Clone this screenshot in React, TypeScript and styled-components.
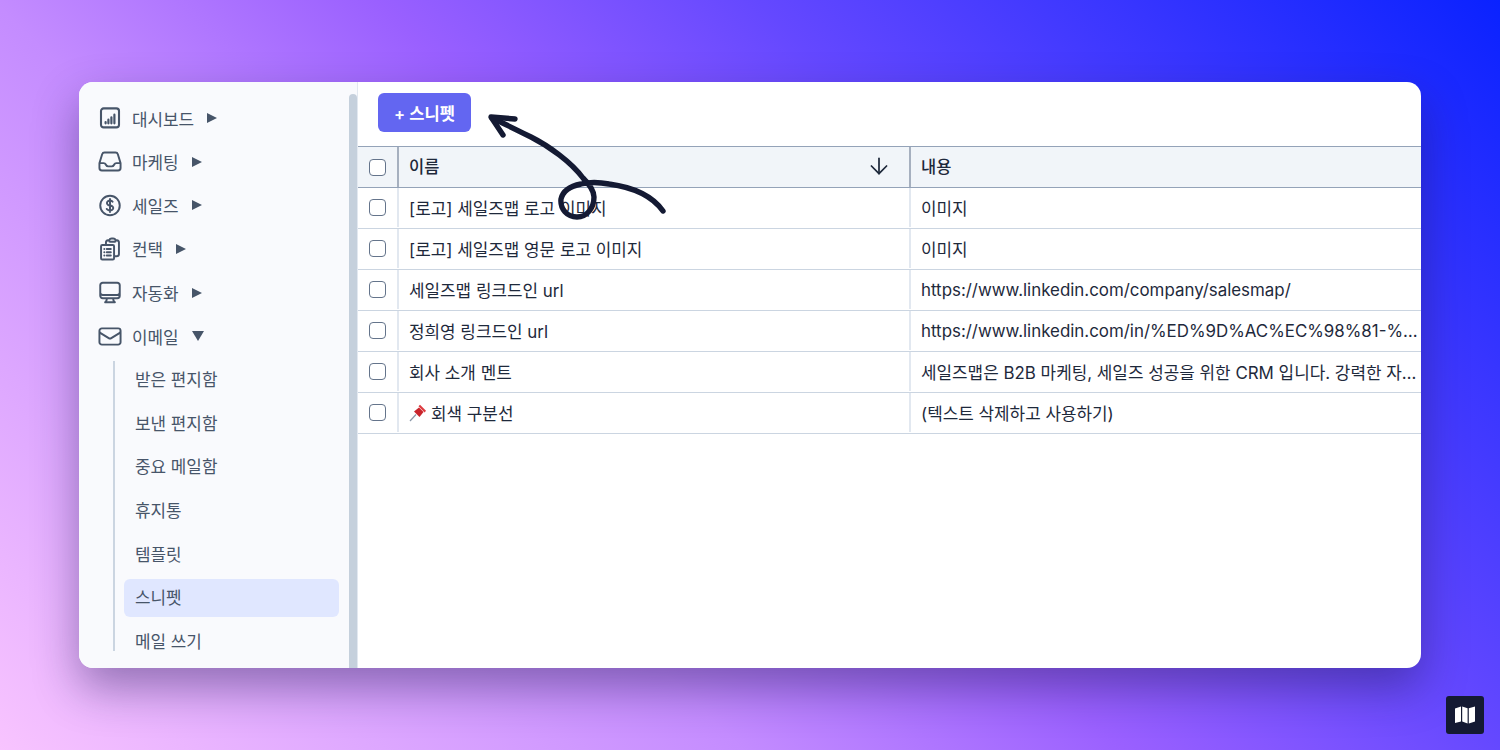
import React from "react";
import styled, { createGlobalStyle } from "styled-components";
import { ArrowDown } from "lucide-react";
import {
  HiOutlineInbox,
  HiOutlineCurrencyDollar,
  HiOutlineClipboardDocumentList,
  HiOutlineComputerDesktop,
  HiOutlineEnvelope,
} from "react-icons/hi2";

const GlobalStyle = createGlobalStyle`
  html, body { margin: 0; padding: 0; }
  body { font-family: Inter, "Noto Sans CJK KR", sans-serif; }
  * { box-sizing: border-box; }
`;

const DashIcon = () => (
  <svg width="24" height="24" viewBox="0 0 24 24" fill="none" stroke="currentColor" strokeWidth="2.1" strokeLinecap="round">
    <rect x="3" y="2.4" width="18" height="19" rx="2.6" />
    <path d="M7.6 17.3v-1.2M10.4 17.3v-3.6M13.4 17.3v-6M16.4 17.3v-8.6" strokeWidth="2.2" />
  </svg>
);

const nav = [
  { label: "대시보드", icon: <DashIcon /> },
  { label: "마케팅", icon: <HiOutlineInbox size={27} strokeWidth={1.8} /> },
  { label: "세일즈", icon: <HiOutlineCurrencyDollar size={27} strokeWidth={1.8} /> },
  { label: "컨택", icon: <HiOutlineClipboardDocumentList size={26} strokeWidth={1.8} /> },
  { label: "자동화", icon: <HiOutlineComputerDesktop size={27} strokeWidth={1.8} /> },
];

const mailItems = ["받은 편지함", "보낸 편지함", "중요 메일함", "휴지통", "템플릿", "스니펫", "메일 쓰기"];

const rows = [
  { name: "[로고] 세일즈맵 로고 이미지", body: "이미지" },
  { name: "[로고] 세일즈맵 영문 로고 이미지", body: "이미지" },
  { name: "세일즈맵 링크드인 url", body: "https://www.linkedin.com/company/salesmap/" },
  { name: "정희영 링크드인 url", body: "https://www.linkedin.com/in/%ED%9D%AC%EC%98%81-%…" },
  { name: "회사 소개 멘트", body: "세일즈맵은 B2B 마케팅, 세일즈 성공을 위한 CRM 입니다. 강력한 자…" },
  { name: "회색 구분선", body: "(텍스트 삭제하고 사용하기)", pinned: true },
];

const App = () => {
  return (
    <Page>
      <GlobalStyle />
      <Window>
        <Sidebar>
          <Nav>
            {nav.map((item) => (
              <NavItem key={item.label}>
                <NavIcon>{item.icon}</NavIcon>
                <NavLabel>{item.label}</NavLabel>
                <Caret />
              </NavItem>
            ))}
            <NavItem>
              <NavIcon>
                <HiOutlineEnvelope size={27} strokeWidth={1.8} />
              </NavIcon>
              <NavLabel>이메일</NavLabel>
              <Caret open />
            </NavItem>
            <SubList>
              {mailItems.map((item) => (
                <SubItem key={item} active={item === "스니펫"}>
                  {item}
                </SubItem>
              ))}
            </SubList>
          </Nav>
          <ScrollTrack>
            <ScrollThumb />
          </ScrollTrack>
        </Sidebar>
        <Main>
          <TopBar>
            <AddButton>+ 스니펫</AddButton>
          </TopBar>
          <HeadRow>
            <HeadCheckCell>
              <Check />
            </HeadCheckCell>
            <HeadCell>
              이름
              <ArrowDown size={26} strokeWidth={1.6} color="#1e293b" />
            </HeadCell>
            <HeadCell>내용</HeadCell>
          </HeadRow>
          {rows.map((row) => (
            <Row key={row.name}>
              <CheckCell>
                <Check />
              </CheckCell>
              <Cell>
                {row.pinned && (
                  <svg width="18" height="18" viewBox="0 0 18 18">
                    <path d="M1 17L7 10.5" stroke="#8a97a8" strokeWidth="1.2" />
                    <path d="M5 7.5L10 3.5 14.5 8 10.5 13Z" fill="#c9252c" />
                    <path d="M9.5 2.2L11 0.8 17 6.8 15.6 8.4Z" fill="#dd3a3f" />
                  </svg>
                )}
                <CellText>{row.name}</CellText>
              </Cell>
              <Cell>
                <CellText>{row.body}</CellText>
              </Cell>
            </Row>
          ))}
        </Main>
        <Scribble width="200" height="120" viewBox="0 0 200 120" fill="none">
          <path
            d="M182 109C170 92 150 85 128 82C118 80 108 80 100 82C90 84 82 88 80 97C79 107 86 115 96 115C106 115 113 106 113 95C113 88 108 82 102 76C90 60 68 44 50 35C36 28 24 22 11 16"
            stroke="#141a33"
            strokeWidth="5.4"
            strokeLinecap="round"
            strokeLinejoin="round"
          />
          <path
            d="M34 17L10 15L22 33"
            stroke="#141a33"
            strokeWidth="5.4"
            strokeLinecap="round"
            strokeLinejoin="round"
          />
        </Scribble>
      </Window>
      <Logo>
        <svg width="22" height="18" viewBox="0 0 22 18">
          <path d="M1 2.5L7 0.5V15.5L1 17ZM8.2 0.5L13.6 2.2V17.5L8.2 15.5ZM14.8 2.2L21 0.5V15.5L14.8 17.5Z" fill="#fff" />
        </svg>
      </Logo>
    </Page>
  );
};

const Page = styled.div`
  position: relative;
  width: 1500px;
  height: 750px;
  padding: 82px 79px;
  overflow: hidden;
  background: linear-gradient(45deg, #f8c4ff 0%, #c48cff 33%, #9a60ff 50%, #6448ff 67%, #0a22ff 100%);
`;

const Window = styled.div`
  position: relative;
  display: flex;
  width: 1342px;
  height: 586px;
  background: #fff;
  border-radius: 14px;
  overflow: hidden;
  box-shadow: 0 20px 45px rgba(30, 25, 80, 0.42);
`;

const Sidebar = styled.aside`
  display: flex;
  flex: none;
  width: 279px;
  background: #f9fafd;
  border-right: 1px solid #e2e8f0;
`;

const Nav = styled.nav`
  display: flex;
  flex-direction: column;
  gap: 5.67px;
  flex: 1;
  padding: 17px 10px 0 18px;
`;

const NavItem = styled.div`
  display: flex;
  align-items: center;
  flex: none;
  height: 38px;
  color: #475569;
`;

const NavIcon = styled.span`
  display: flex;
  align-items: center;
  justify-content: center;
  flex: none;
  width: 26px;
  margin-right: 9px;
`;

const NavLabel = styled.span`
  font-size: 16.9px;
  color: #475569;
`;

const Caret = styled.span<{ open?: boolean }>`
  width: 0;
  height: 0;
  margin-left: 13px;
  ${(p) =>
    p.open
      ? `border-left: 6px solid transparent; border-right: 6px solid transparent; border-top: 10px solid #475569;`
      : `border-top: 5.5px solid transparent; border-bottom: 5.5px solid transparent; border-left: 10px solid #475569;`}
`;

const SubList = styled.div`
  display: flex;
  flex-direction: column;
  gap: 5.67px;
  flex: none;
  height: 290px;
  margin-left: 16px;
  padding-left: 9px;
  border-left: 2px solid #cbd5e1;
`;

const SubItem = styled.div<{ active?: boolean }>`
  flex: none;
  height: 38px;
  line-height: 38px;
  padding-left: 11px;
  font-size: 16.9px;
  color: #475569;
  border-radius: 6px;
  background: ${(p) => (p.active ? "#e0e7ff" : "transparent")};
`;

const ScrollTrack = styled.div`
  flex: none;
  width: 8px;
  padding-top: 12px;
`;

const ScrollThumb = styled.div`
  height: 100%;
  background: #c5d0dc;
  border-radius: 4px 4px 0 0;
`;

const Main = styled.main`
  flex: 1;
  min-width: 0;
`;

const TopBar = styled.div`
  height: 64px;
  padding: 11px 20px;
`;

const AddButton = styled.button`
  display: block;
  width: 93px;
  height: 39px;
  padding: 0;
  border: 0;
  border-radius: 6px;
  background: #6366f1;
  color: #fff;
  font-family: inherit;
  font-size: 16.5px;
  font-weight: 600;
`;

const HeadRow = styled.div`
  display: grid;
  grid-template-columns: 41px 512px 1fr;
  height: 42px;
  background: #f1f5f9;
  border-top: 1px solid #94a3b8;
  border-bottom: 1px solid #94a3b8;
`;

const Row = styled.div`
  display: grid;
  grid-template-columns: 41px 512px 1fr;
  height: 41px;
  padding-bottom: 1px;
  border-bottom: 1px solid #cbd5e1;
`;

const CheckCell = styled.div`
  display: flex;
  align-items: center;
  justify-content: center;
  border-right: 2px solid #e2e8f0;
`;

const HeadCheckCell = styled(CheckCell)`
  border-right-color: #a6b0bf;
`;

const Check = styled.span`
  display: block;
  width: 17px;
  height: 17px;
  background: #fff;
  border: 1px solid #64748b;
  border-radius: 4px;
`;

const HeadCell = styled.div`
  display: flex;
  align-items: center;
  justify-content: space-between;
  min-width: 0;
  padding: 0 17px 2px 10px;
  font-size: 16.5px;
  font-weight: 500;
  color: #1e293b;
  border-right: 2px solid #a6b0bf;
  &:last-child {
    border-right: 0;
  }
`;

const Cell = styled.div`
  display: flex;
  align-items: center;
  gap: 4px;
  min-width: 0;
  padding: 0 0 0 10px;
  font-size: 16.9px;
  color: #1e293b;
  border-right: 2px solid #e2e8f0;
  &:last-child {
    border-right: 0;
  }
`;

const CellText = styled.span`
  white-space: nowrap;
`;

const Scribble = styled.svg`
  position: absolute;
  left: 402px;
  top: 20px;
  pointer-events: none;
`;

const Logo = styled.div`
  position: absolute;
  left: 1446px;
  top: 696px;
  display: flex;
  align-items: center;
  justify-content: center;
  width: 38px;
  height: 38px;
  background: #141a33;
  border-radius: 3px;
`;

export default App;
